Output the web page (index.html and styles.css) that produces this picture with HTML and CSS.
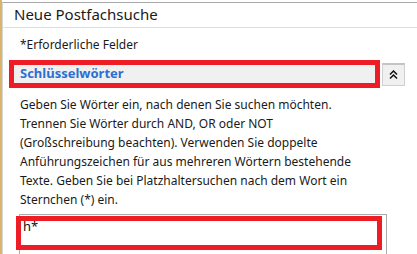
FILE: index.html
```html
<!DOCTYPE html>
<html lang="de">
<head>
  <meta charset="UTF-8">
  <meta name="viewport" content="width=device-width, initial-scale=1.0">
  <title>Neue Postfachsuche</title>
  <link rel="stylesheet" href="styles.css">
</head>
<body>
  <div class="panel">
    <div class="panel-title">Neue Postfachsuche</div>
    <div class="panel-body">
      <div class="required">*Erforderliche Felder</div>

      <div class="section-row">
        <div class="section-head">Schlüsselwörter</div>
        <button class="collapse-btn" title="Reduzieren">
          <svg width="9" height="9" viewBox="0 0 9 9">
            <path d="M1 4.5 L4.5 1 L8 4.5 M1 8.5 L4.5 5 L8 8.5" fill="none" stroke="#111" stroke-width="1.5"/>
          </svg>
        </button>
      </div>

      <p class="hint">
        Geben Sie Wörter ein, nach denen Sie suchen möchten.<br>
        Trennen Sie Wörter durch AND, OR oder NOT<br>
        (Großschreibung beachten). Verwenden Sie doppelte<br>
        Anführungszeichen für aus mehreren Wörtern bestehende<br>
        Texte. Geben Sie bei Platzhaltersuchen nach dem Wort ein<br>
        Sternchen (*) ein.
      </p>

      <div class="keyword-field">
        <textarea class="keyword-input">h*</textarea>
        <div class="mark"></div>
      </div>
    </div>
  </div>
</body>
</html>
```

FILE: styles.css
```css
body {
  margin: 0;
  height: 254px;
  overflow: hidden;
  background-color: #ffffff;
  border-left: 2px solid #d9b56b;
  font-family: "Noto Sans", "Open Sans", Arial, sans-serif;
  color: #1a1a1a;
}

.panel {
  margin-top: 2px;
  height: 252px;
  border-top: 1px solid #a9a9a9;
  border-left: 1px solid #d6d6d6;
}

.panel-title {
  height: 24px;
  line-height: 22px;
  padding-left: 11px;
  font-size: 15px;
  border-bottom: 1px solid #dedede;
}

.panel-body {
  padding-left: 6px;
}

.required {
  margin-top: 8px;
  padding-left: 11px;
  font-size: 12px;
  line-height: 17px;
}

.section-row {
  display: flex;
  align-items: center;
  gap: 2px;
  margin-top: 7px;
}

.section-head {
  width: 355px;
  height: 18px;
  line-height: 17px;
  padding-left: 6px;
  border: 5px solid #ee1c25;
  background-color: #f0f0f0;
  color: #2a6fd4;
  font-size: 13px;
  font-weight: bold;
}

.collapse-btn {
  width: 23px;
  height: 23px;
  padding: 0;
  border: 1px solid #d0d0d0;
  border-top: 2px solid #c4c4c4;
  background-color: #f0f0f0;
  display: flex;
  align-items: center;
  justify-content: center;
}

.hint {
  margin: 7px 0 0 0;
  padding-left: 11px;
  font-size: 12px;
  line-height: 19px;
}

.keyword-field {
  position: relative;
  margin-top: 5px;
  margin-left: 10px;
}

.keyword-input {
  display: block;
  box-sizing: border-box;
  width: 368px;
  height: 50px;
  margin: 0;
  padding: 4px 3px;
  border: 1px solid #ababab;
  resize: none;
  font-family: "Noto Sans", "Open Sans", Arial, sans-serif;
  font-size: 13px;
  line-height: 15px;
  color: #111;
}

.mark {
  position: absolute;
  left: -3px;
  top: 2px;
  width: 356px;
  height: 24px;
  border: 5px solid #ee1c25;
}
```
